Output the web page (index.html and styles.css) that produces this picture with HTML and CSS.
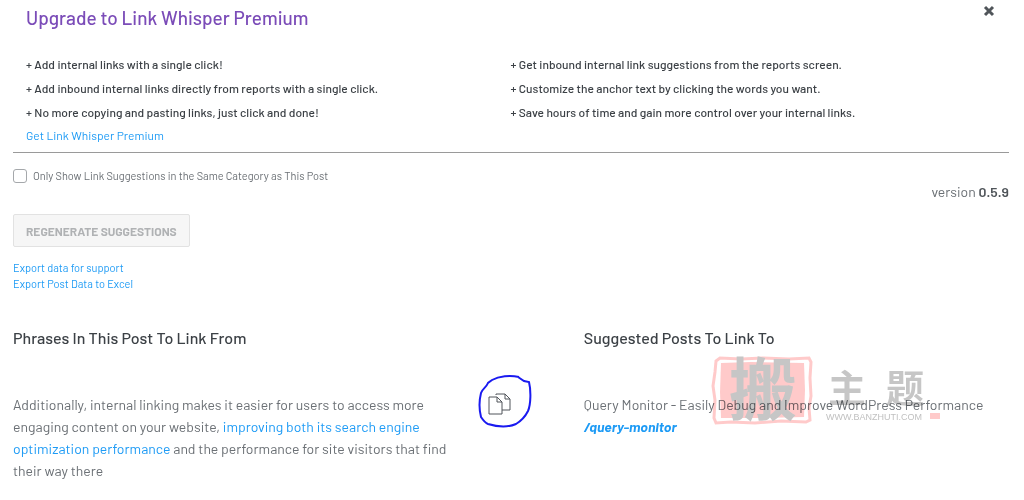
FILE: index.html
```html
<!DOCTYPE html>
<html lang="en">
<head>
    <meta charset="UTF-8">
    <meta name="viewport" content="width=device-width, initial-scale=1.0">
    <title>Link Whisper</title>
    <link rel="stylesheet" href="styles.css">
</head>
<body>
    <!-- Premium box -->
    <section class="premium">
        <div class="premium-header">
            <h2>Upgrade to Link Whisper Premium</h2>
            <button class="close-button" type="button" aria-label="Close">
                <svg width="12" height="12" viewBox="0 0 12 12"><path d="M2 2l8 8M10 2l-8 8"/></svg>
            </button>
        </div>
        <div class="premium-features">
            <ul>
                <li>+ Add internal links with a single click!</li>
                <li>+ Add inbound internal links directly from reports with a single click.</li>
                <li>+ No more copying and pasting links, just click and done!</li>
            </ul>
            <ul>
                <li>+ Get inbound internal link suggestions from the reports screen.</li>
                <li>+ Customize the anchor text by clicking the words you want.</li>
                <li>+ Save hours of time and gain more control over your internal links.</li>
            </ul>
        </div>
        <a class="premium-link" href="#">Get Link Whisper Premium</a>
    </section>

    <!-- Options -->
    <section class="options">
        <div class="options-left">
            <div class="check-row">
                <input type="checkbox" id="sameCategory">
                <label for="sameCategory">Only Show Link Suggestions in the Same Category as This Post</label>
            </div>
            <button class="regenerate" type="button" disabled>REGENERATE SUGGESTIONS</button>
            <div class="export-links">
                <a href="#">Export data for support</a>
                <a href="#">Export Post Data to Excel</a>
            </div>
        </div>
        <p class="version">version <b>0.5.9</b></p>
    </section>

    <!-- Suggestions -->
    <section class="suggestions">
        <div class="phrases">
            <h3>Phrases In This Post To Link From</h3>
            <div class="phrase-row">
                <p>Additionally, internal linking makes it easier for users to access more engaging content on your website, <a href="#">improving both its search engine optimization performance</a> and the performance for site visitors that find their way there</p>
                <button class="copy-button" type="button" aria-label="Copy sentence">
                    <svg class="copy-icon" width="54" height="54" viewBox="0 0 54 54">
                        <path class="circle" d="M41 3C32 1 21 2 14 6L10 9C8 14 4 15 3 19C1 27 1 35 3 43C5 46 7 49 10 50C20 53 31 53 38 50C43 47 47 43 50 37C53 30 53 16 51 8L46 7L40 3"/>
                        <path class="page" d="M18 21V20H27L32 25V36H24M27 20V25H32"/>
                        <path class="page front" d="M11 23H19L24 28V40H11ZM19 23V28H24"/>
                    </svg>
                </button>
            </div>
        </div>
        <div class="posts">
            <h3>Suggested Posts To Link To</h3>
            <div class="post-row">
                <p>Query Monitor - Easily Debug and Improve WordPress Performance</p>
                <a class="post-slug" href="#">/query-monitor</a>
                <svg class="watermark" width="242" height="72" viewBox="0 0 242 72">
                    <path class="stamp-frame" d="M5 5L9 2L30 3L52 2L78 3L98 2L100 6L99 22L100 40L98 52L99 64L95 66L70 65L44 67L20 66L5 67L3 62L4 44L2 30L4 16Z"/>
                    <path class="stamp" d="M10 7L40 6L93 7L94 34L93 61L50 62L10 62L9 36Z"/>
                    <text class="stamp-char" x="18" y="59">搬</text>
                    <text class="mark-char" x="117" y="46">主</text>
                    <text class="mark-char" x="175" y="46">题</text>
                    <text class="mark-url" x="115" y="64">WWW.BANZHUTI.COM</text>
                    <path class="stamp" d="M219 57h10v6h-10z"/>
                </svg>
            </div>
        </div>
    </section>
</body>
</html>
```
FILE: styles.css
```css
* {
    box-sizing: border-box;
    margin: 0;
    padding: 0;
}

body {
    font-family: Barlow, Roboto, sans-serif;
    font-size: 14px;
    line-height: 22px;
    padding: 0 15px 0 13px;
    background: #ffffff;
    color: #6b7075;
}

a {
    color: #1e9bf5;
    text-decoration: none;
}

ul {
    list-style: none;
}

/* Premium box */
.premium {
    padding: 0 14px 6px 13px;
    border-bottom: 1px solid #9a9a9a;
}

.premium-header {
    display: flex;
    justify-content: space-between;
    align-items: flex-start;
    padding-top: 5px;
    margin-bottom: 21px;
}

.premium-header h2 {
    font-size: 19px;
    font-weight: 500;
    line-height: 26px;
    color: #7b4cb8;
}

.close-button {
    display: flex;
    border: none;
    background: none;
    cursor: pointer;
}

.close-button svg {
    fill: none;
    stroke: #50555a;
    stroke-width: 3;
}

.premium-features {
    display: grid;
    grid-template-columns: 1fr 1fr;
}

.premium-features li {
    font-size: 12px;
    font-weight: 500;
    line-height: 24px;
    color: #3c4146;
}

.premium-link {
    display: block;
    font-size: 12px;
    line-height: 22px;
}

/* Options */
.options {
    display: flex;
    justify-content: space-between;
    padding-top: 15px;
}

.check-row {
    display: flex;
    align-items: center;
    gap: 6px;
    margin-bottom: 30px;
    font-size: 11px;
    line-height: 16px;
}

.check-row input {
    appearance: none;
    width: 14px;
    height: 14px;
    border: 1px solid #a5a8ab;
    border-radius: 3px;
    background: #ffffff;
}

.regenerate {
    height: 33px;
    padding: 0 12px;
    border: 1px solid #e2e2e2;
    border-radius: 2px;
    background: #f6f6f6;
    color: #b0b2b4;
    font-family: inherit;
    font-size: 12px;
    font-weight: 700;
}

.export-links {
    display: flex;
    flex-direction: column;
    align-items: flex-start;
    margin-top: 13px;
    font-size: 11px;
    line-height: 16px;
}

.version {
    margin-top: 13px;
}

.version b {
    font-weight: 600;
    color: #50555a;
}

/* Suggestions */
.suggestions {
    display: grid;
    grid-template-columns: 4fr 3fr;
    column-gap: 4px;
    padding-top: 35px;
}

.suggestions h3 {
    margin-bottom: 45px;
    font-size: 16px;
    font-weight: 500;
    line-height: 22px;
    color: #3c4146;
}

.phrase-row {
    display: flex;
    align-items: flex-start;
    justify-content: space-between;
    padding-right: 48px;
}

.phrase-row p {
    width: 440px;
}

/* the pen circle hangs over the row above */
.copy-button {
    margin-top: -20px;
    border: none;
    background: none;
    cursor: pointer;
}

.copy-icon {
    display: block;
    fill: none;
}

.circle {
    stroke: #1a1af0;
    stroke-width: 2;
}

.page {
    stroke: #50555a;
    stroke-width: 1;
}

.front {
    fill: #ffffff;
}

.post-row {
    position: relative;
}

.post-slug {
    font-style: italic;
    font-weight: 700;
}

/* Watermark */
.watermark {
    position: absolute;
    left: 127px;
    top: -38px;
    overflow: visible;
    opacity: 0.8;
    mix-blend-mode: multiply;
    pointer-events: none;
}

.stamp-frame {
    fill: none;
    stroke: #ffbdbd;
    stroke-width: 3;
}

.stamp {
    fill: #ffbdbd;
}

.stamp-char,
.mark-char {
    font-family: "Noto Sans CJK SC", sans-serif;
    font-weight: 700;
    fill: #b8b8b8;
}

.stamp-char {
    font-size: 68px;
}

.mark-char {
    font-size: 38px;
}

.mark-url {
    font-family: "Liberation Sans", sans-serif;
    font-size: 9px;
    fill: #b0b0b0;
}
```
